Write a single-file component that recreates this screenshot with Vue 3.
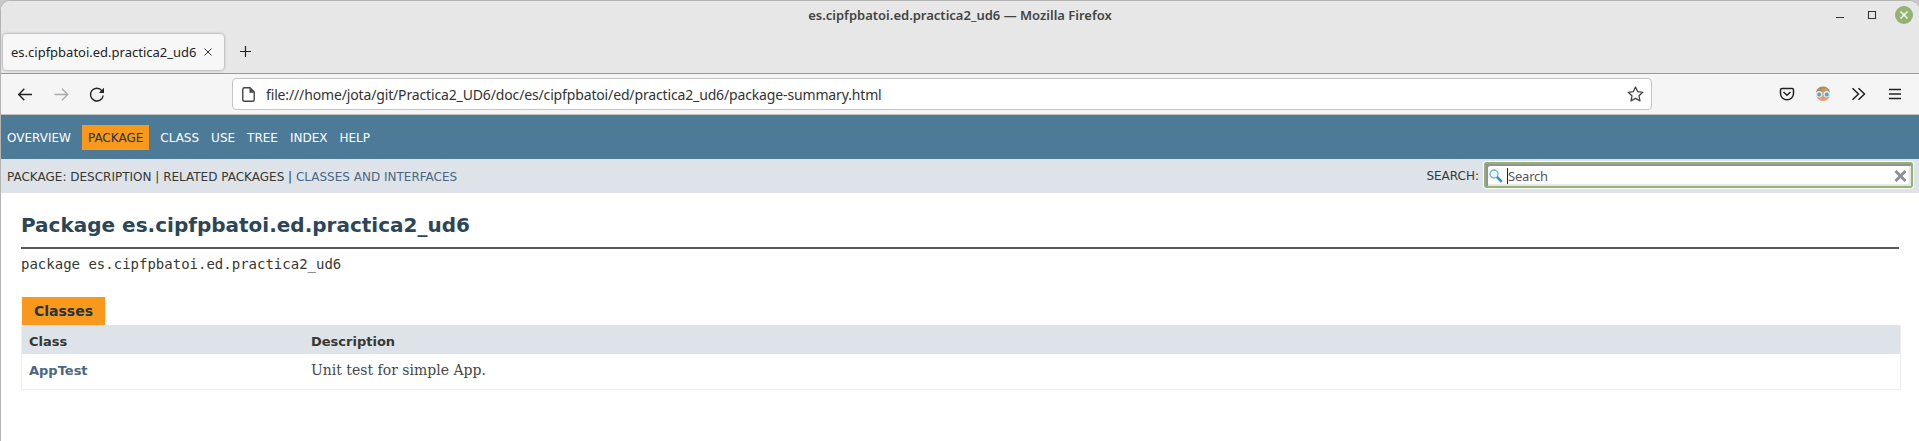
<script setup>
const navItems = ['OVERVIEW', 'PACKAGE', 'CLASS', 'USE', 'TREE', 'INDEX', 'HELP']
</script>

<template>
  <div class="window">
    <header class="chrome">
      <div class="titlebar">
        <span class="title">es.cipfpbatoi.ed.practica2_ud6 — Mozilla Firefox</span>
        <svg class="controls" width="90" height="24" viewBox="0 0 90 24">
          <path d="M7 16.5h8M39.500 10.500h7v7h-7z" fill="none" stroke="#333" stroke-width="1.1" />
          <circle cx="75" cy="14" r="9" fill="#92b372" />
          <path d="M71.500 10.500l7 7m0-7l-7 7" stroke="#fff" stroke-width="1.400" />
        </svg>
      </div>
      <div class="tabs">
        <div class="tab">
          <span class="tab-label">es.cipfpbatoi.ed.practica2_ud6</span>
          <svg width="8" height="8" viewBox="0 0 8 8"><path d="M.5.5l7 7m0-7l-7 7" stroke="#333" stroke-width="1" /></svg>
        </div>
        <svg class="plus" width="12" height="12" viewBox="0 0 12 12"><path d="M5.500 0v11M0 5.500h11" stroke="#222" stroke-width="1.200" /></svg>
      </div>
    </header>

    <div class="toolbar">
      <svg class="nav-icons" width="100" height="20" viewBox="0 0 100 20" fill="none" stroke="#222" stroke-width="1.4">
        <path d="M15 10.500H2M7.300 4.800L1.700 10.500l5.600 5.700" />
        <path d="M37.500 10.500h13M45 4.800l5.700 5.700-5.700 5.700" stroke="#aaa" />
        <path d="M85 6.800A6.400 6.400 0 1 0 86.200 11.500" />
        <path d="M87 3.800v5.200h-5.200z" fill="#222" stroke="none" />
      </svg>
      <div class="urlbar">
        <svg class="page-icon" width="13" height="15" viewBox="0 0 13 15"><path d="M2.500.8H8L12.200 5v7.700q0 1.500-1.500 1.500H2.300Q.8 14.200.8 12.700V2.300Q.8.8 2.500.8z" fill="none" stroke="#444" stroke-width="1.400" /><path d="M7.500 1v4.700h4.700z" fill="#444" /></svg>
        <span class="url">file:///home/jota/git/Practica2_UD6/doc/es/cipfpbatoi/ed/practica2_ud6/package-summary.html</span>
        <svg class="star" width="17" height="16" viewBox="0 0 17 16"><path d="M8.500 1l2.200 4.700 5.100.6-3.800 3.500 1 5.100-4.500-2.500L4 14.900l1-5.100L1.200 6.300l5.100-.6z" fill="none" stroke="#444" stroke-width="1.300" stroke-linejoin="round" /></svg>
      </div>
      <svg class="tool-icons" width="125" height="20" viewBox="0 0 125 20" fill="none" stroke="#222" stroke-width="1.5">
        <path d="M3.200 4.500h9.800q1.500 0 1.500 1.500v3.500a6.500 6.300 0 0 1-13 0V6q0-1.500 1.700-1.500zM4.500 8l3.500 3.200L11.500 8" />
        <g stroke="none">
          <circle cx="44" cy="10" r="7" fill="#ec9a72" />
          <path d="M37 8a7.200 7.200 0 0 1 14 0z" fill="#a89068" />
          <path d="M43 4.500h5l1.500 3.500h-6z" fill="#d09a72" />
          <circle cx="40.200" cy="10.300" r="3.200" fill="#dcebee" /><circle cx="47.800" cy="10.300" r="3.200" fill="#dcebee" />
          <circle cx="40.200" cy="10.500" r="1.900" fill="#56a7bd" /><circle cx="47.800" cy="10.500" r="1.900" fill="#56a7bd" />
        </g>
        <path d="M73.500 4.200l6 5.800-6 5.800M79.500 4.200l6 5.800-6 5.800" />
        <path d="M110 5.500h12M110 10h12M110 14.500h12" />
      </svg>
    </div>

    <main class="page">
      <nav class="topnav">
        <span v-for="item in navItems" :key="item" :class="['nav-item', { active: item === 'PACKAGE' }]">{{ item }}</span>
      </nav>
      <div class="subnav">
        <span class="subnav-list">PACKAGE: DESCRIPTION | RELATED PACKAGES | <a>CLASSES AND INTERFACES</a></span>
        <div class="search">
          <span class="search-label">SEARCH:</span>
          <div class="search-box">
            <svg width="14" height="14" viewBox="0 0 14 14"><circle cx="5" cy="5" r="4" fill="#eef8fc" stroke="#73b4d2" stroke-width="1.300" /><path d="M8 8l4.800 4.800" stroke="#2f90cc" stroke-width="2.500" /></svg>
            <span class="placeholder">Search</span>
            <svg class="clear" width="13" height="12" viewBox="0 0 13 12"><path d="M1.500 1l10 10m0-10l-10 10" stroke="#8b9196" stroke-width="3" /></svg>
          </div>
        </div>
      </div>

      <section class="content">
        <h1>Package es.cipfpbatoi.ed.practica2_ud6</h1>
        <hr />
        <div class="signature">package es.cipfpbatoi.ed.practica2_ud6</div>
        <div class="caption">Classes</div>
        <div class="summary">
          <div class="row head"><span>Class</span><span>Description</span></div>
          <div class="row"><a>AppTest</a><span class="block">Unit test for simple App.</span></div>
        </div>
      </section>
    </main>
  </div>
</template>

<style>
body { margin: 0; background: #c8c8c8; overflow: hidden; }
</style>

<style scoped>
* { box-sizing: border-box; }
svg { flex: none; display: block; }
.window { width: 1919px; height: 441px; border-left: 1px solid #b4b4b4; border-top: 1px solid #b4b4b4; border-radius: 10px 10px 0 0; overflow: hidden; background: #fff; font-family: "DejaVu Sans", sans-serif; color: #353833; white-space: nowrap; }
.chrome { height: 73px; background: #e7e7e7; border-bottom: 1px solid #999; }
.titlebar { height: 31px; display: grid; grid-template-columns: 1fr auto 1fr; align-items: start; }
.title { grid-column: 2; margin-top: 4px; font: 600 13px/20px "Noto Sans", sans-serif; color: #444; }
.controls { justify-self: end; }
.tabs { display: flex; align-items: center; height: 41px; padding: 0 0 1px 2px; }
.tab { display: flex; align-items: center; width: 221px; height: 36px; padding-left: 8px; border-radius: 4px; background: #f7f7f7; box-shadow: 0 0 3px #888; }
.tab-label { width: 193px; font: 13px/20px "Noto Sans", sans-serif; color: #222; }
.plus { margin-left: 16px; }
.toolbar { height: 41px; background: #f5f5f5; border-bottom: 1px solid #c2bfbd; display: flex; align-items: center; }
.nav-icons { margin-left: 16px; }
.urlbar { margin-left: 115px; width: 1420px; height: 32px; border: 1px solid #c4c4c4; border-radius: 4px; background: #fff; display: flex; align-items: center; padding: 0 7px 0 9px; }
.url { margin: 1px 0 0 11px; font: 14px/22px "Noto Sans", sans-serif; letter-spacing: -0.145px; color: #333; }
.star { margin-left: auto; }
.tool-icons { margin-left: 127px; }
.topnav { height: 44px; background: #4d7a97; color: #fff; font-size: 12px; display: flex; align-items: flex-start; padding: 10px 0 0 6px; }
.nav-item { margin-right: 12px; padding-top: 1px; line-height: 24px; }
.nav-item.active { margin: 0 11px 0 -1px; background: #f8981d; color: #253441; padding: 1px 6px 0; }
.subnav { height: 34px; background: #dee3e9; display: flex; justify-content: space-between; align-items: center; font-size: 12px; padding: 0 5px 0 6px; }
.subnav-list { padding-top: 1px; }
.subnav a { color: #4a6782; }
.search { display: flex; align-items: center; padding-bottom: 2px; }
.search-label { margin-right: 4px; padding-top: 2px; }
.search-box { width: 431px; height: 28px; border: 1px solid #fff; border-radius: 3px; background: #fff; box-shadow: inset 0 0 0 2px #92b372, inset 4px 4px 0 #929292, inset -4px -4px 0 #e8e8e8; display: flex; align-items: center; padding: 1px 6px 0 5px; }
.placeholder { margin-left: 4px; border-left: 1px solid #222; font: 13px/16px "Noto Sans", sans-serif; letter-spacing: -0.2px; color: #555; }
.clear { margin-left: auto; }
.content { padding: 22px 20px 0; }
h1 { margin: 0; font-size: 20px; line-height: 20px; color: #2c4557; }
hr { margin: 12px 0 0; height: 2px; border: 0; background: #5a5c59; }
.signature { margin-top: 7px; font: 14px/17px "DejaVu Sans Mono", monospace; }
.caption { margin: 24px 0 0 1px; width: 83px; height: 28px; padding-left: 12px; background: #f8981d; color: #253441; font: bold 14px/28px "DejaVu Sans", sans-serif; }
.summary { width: 1880px; border: 1px solid #eee; border-top: 0; }
.row { display: grid; grid-template-columns: 282px 1fr; height: 35px; padding-left: 7px; font-size: 13px; line-height: 33px; }
.row.head { height: 29px; background: #dee3e9; font-weight: bold; }
.row a { font-weight: bold; color: #4a6782; }
.block { font: 14px/33px "DejaVu Serif", serif; color: #474747; }
</style>
